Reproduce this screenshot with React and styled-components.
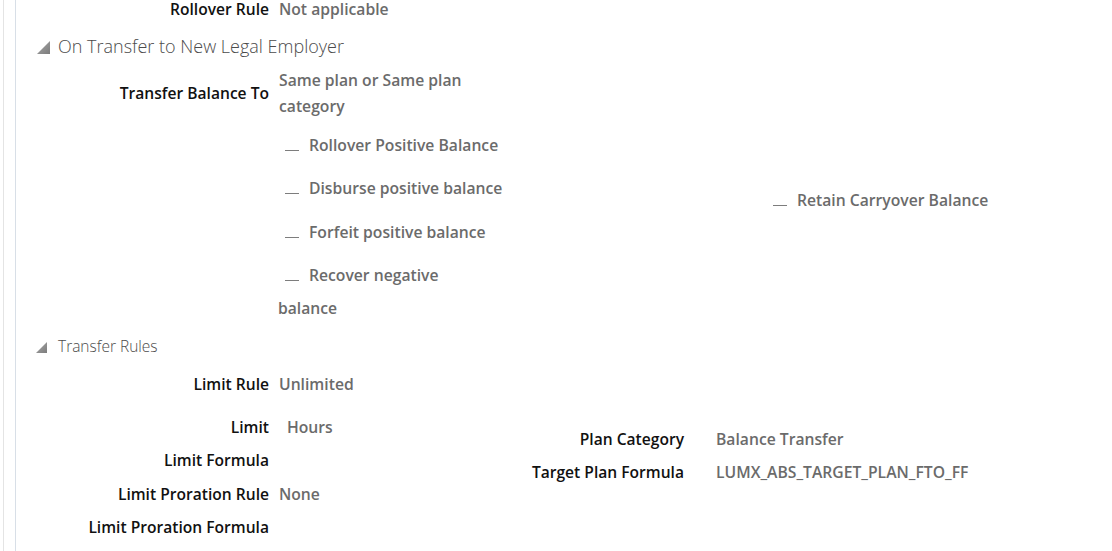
import React from "react";
import styled, { createGlobalStyle } from "styled-components";

const GlobalStyle = createGlobalStyle`
  html, body {
    margin: 0;
    background: #ffffff;
  }
  body {
    font-family: "Open Sans", "Noto Sans", sans-serif;
    overflow: hidden;
  }
`;

// Outer frame with the two thin guide lines on the left
const Frame = styled.div`
  margin-left: 3px;
  padding-left: 11px;
  height: 551px;
  border-left: 1px solid #e4e4e4;
`;

const Panel = styled.div`
  height: 100%;
  border-left: 1px solid #d8dfe7;
`;

const Heading = styled.div`
  display: flex;
  align-items: center;
  height: ${(p) => p.$h}px;
  margin-top: ${(p) => p.$mt}px;
  padding-left: ${(p) => p.$pl}px;
  font-size: ${(p) => p.$size}px;
  font-weight: 300;
  color: #4b4b4b;
  white-space: nowrap;
`;

const Disclosure = styled.svg`
  flex: none;
  margin-right: ${(p) => p.$gap}px;
  margin-top: 2px;
`;

const Field = styled.div`
  display: flex;
  align-items: center;
  height: ${(p) => (p.$h ? `${p.$h}px` : "auto")};
`;

const Label = styled.div`
  flex: none;
  width: ${(p) => p.$w || 253}px;
  text-align: right;
  font-size: 15.6px;
  font-weight: 600;
  line-height: 18px;
  color: #111111;
  white-space: nowrap;
`;

const Value = styled.div`
  margin-left: ${(p) => (p.$gap === undefined ? 10 : p.$gap)}px;
  padding-left: ${(p) => p.$indent || 0}px;
  width: ${(p) => (p.$w ? `${p.$w}px` : "auto")};
  font-size: 15.7px;
  font-weight: 600;
  line-height: 26px;
  color: #6b6b6b;
`;

const TransferSection = styled.div`
  display: flex;
  margin-top: 9px;
`;

const Column = styled.div`
  flex: none;
  width: ${(p) => p.$w}px;
  padding-top: ${(p) => p.$pt || 0}px;
`;

const SideOption = styled.div`
  align-self: center;
  padding-top: 8px;
  margin-left: 260px;
`;

const CheckList = styled.div`
  display: flex;
  flex-direction: column;
  gap: 10.5px;
  margin-top: 9.5px;
  margin-left: 262px;
`;

const Option = styled.div`
  font-size: 15.7px;
  font-weight: 600;
  line-height: 33px;
  color: #6b6b6b;
  white-space: nowrap;
`;

const Dash = styled.span`
  display: inline-block;
  width: 14px;
  height: 1px;
  margin: 0 10px 0 7px;
  background: #7d7d7d;
  vertical-align: 0;
`;

const TwoCol = styled.div`
  display: flex;
`;

const Triangle = ({ size, gap }) => (
  <Disclosure width={size} height={size} viewBox="0 0 12 12" $gap={gap}>
    <defs>
      <linearGradient id={`tri${size}`} x1="0" y1="0" x2="1" y2="1">
        <stop offset="0" stopColor="#a8a8a8" />
        <stop offset="1" stopColor="#7c7c7c" />
      </linearGradient>
    </defs>
    <polygon points="12,0 12,12 0,12" fill={`url(#tri${size})`} />
  </Disclosure>
);

const Check = ({ children }) => (
  <Option>
    <Dash />
    {children}
  </Option>
);

const App = () => (
  <>
    <GlobalStyle />
    <Frame>
      <Panel>
        <Field $h={18}>
          <Label>Rollover Rule</Label>
          <Value>Not applicable</Value>
        </Field>

        <Heading $h={24} $mt={16} $pl={21} $size={18}>
          <Triangle size={13} gap={8} />
          On Transfer to New Legal Employer
        </Heading>

        <TransferSection>
          <Column $w={490}>
            <Field>
              <Label>Transfer Balance To</Label>
              <Value $w={226}>Same plan or Same plan category</Value>
            </Field>
            <CheckList>
              <Check>Rollover Positive Balance</Check>
              <Check>Disburse positive balance</Check>
              <Check>Forfeit positive balance</Check>
              <Check>
                Recover negative
                <br />
                balance
              </Check>
            </CheckList>
          </Column>
          <SideOption>
            <Check>Retain Carryover Balance</Check>
          </SideOption>
        </TransferSection>

        <Heading $h={22} $mt={10} $pl={20} $size={15.5}>
          <Triangle size={11} gap={11} />
          Transfer Rules
        </Heading>

        <Field $h={53}>
          <Label>Limit Rule</Label>
          <Value>Unlimited</Value>
        </Field>

        <TwoCol>
          <Column $w={490}>
            <Field $h={33.5}>
              <Label>Limit</Label>
              <Value $indent={8}>Hours</Value>
            </Field>
            <Field $h={33.5}>
              <Label>Limit Formula</Label>
              <Value />
            </Field>
            <Field $h={33.5}>
              <Label>Limit Proration Rule</Label>
              <Value>None</Value>
            </Field>
            <Field $h={33.5}>
              <Label>Limit Proration Formula</Label>
              <Value />
            </Field>
          </Column>
          <Column $w={500} $pt={12}>
            <Field $h={33}>
              <Label $w={178}>Plan Category</Label>
              <Value $gap={32}>Balance Transfer</Value>
            </Field>
            <Field $h={33}>
              <Label $w={178}>Target Plan Formula</Label>
              <Value $gap={32}>LUMX_ABS_TARGET_PLAN_FTO_FF</Value>
            </Field>
          </Column>
        </TwoCol>
      </Panel>
    </Frame>
  </>
);

export default App;
